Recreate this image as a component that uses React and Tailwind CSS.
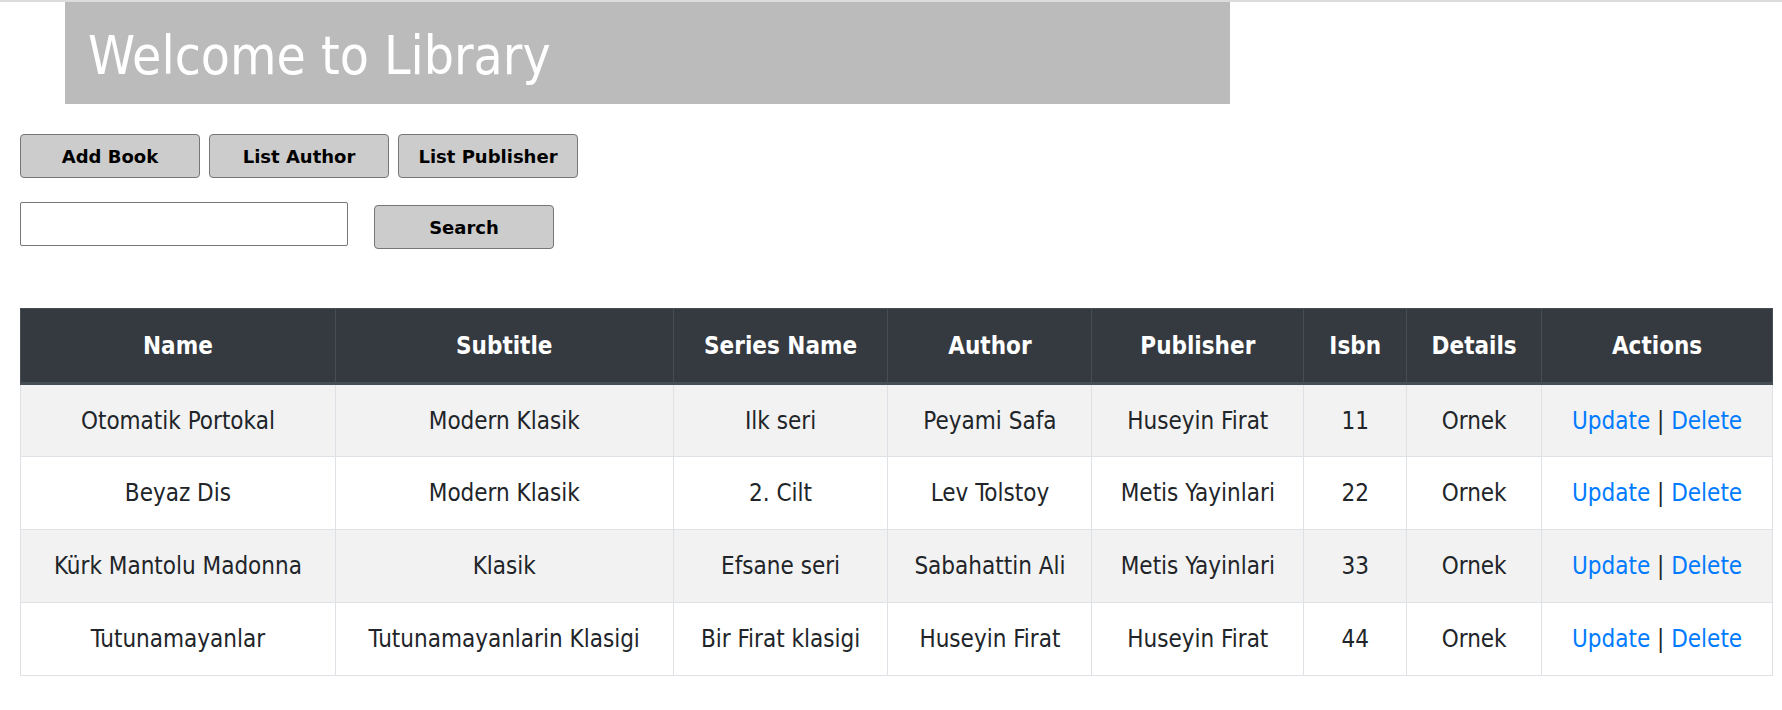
import React, { useState } from 'react'

const books = [
  { name: 'Otomatik Portokal', subtitle: 'Modern Klasik', series: 'Ilk seri', author: 'Peyami Safa', publisher: 'Huseyin Firat', isbn: '11', details: 'Ornek' },
  { name: 'Beyaz Dis', subtitle: 'Modern Klasik', series: '2. Cilt', author: 'Lev Tolstoy', publisher: 'Metis Yayinlari', isbn: '22', details: 'Ornek' },
  { name: 'Kürk Mantolu Madonna', subtitle: 'Klasik', series: 'Efsane seri', author: 'Sabahattin Ali', publisher: 'Metis Yayinlari', isbn: '33', details: 'Ornek' },
  { name: 'Tutunamayanlar', subtitle: 'Tutunamayanlarin Klasigi', series: 'Bir Firat klasigi', author: 'Huseyin Firat', publisher: 'Huseyin Firat', isbn: '44', details: 'Ornek' },
]

const columns = [
  { label: 'Name', w: 'w-[315px]' },
  { label: 'Subtitle', w: 'w-[338px]' },
  { label: 'Series Name', w: 'w-[215px]' },
  { label: 'Author', w: 'w-[204px]' },
  { label: 'Publisher', w: 'w-[212px]' },
  { label: 'Isbn', w: 'w-[103px]' },
  { label: 'Details', w: 'w-[135px]' },
  { label: 'Actions', w: 'w-[231px]' },
]

function GrayButton({ children, className = '' }) {
  return (
    <button className={`w-[180px] h-[44px] bg-[#cccccc] border border-[#767676] rounded-[4px] font-['DejaVu_Sans',sans-serif] text-[18px] font-bold text-black pt-[1px] ${className}`}>
      {children}
    </button>
  )
}

export default function App() {
  const [query, setQuery] = useState('')

  return (
    <div className="min-h-[710px] bg-white border-t-2 border-[#dcdcdc] font-['DejaVu_Sans_Condensed','DejaVu_Sans',sans-serif] text-[#212529]">

      {/* Başlık */}
      <div className="ml-[65px] w-[1165px] h-[102px] bg-[#bbbbbb] flex items-center pl-[23px] pt-[4px]">
        <h1 className="text-white text-[53px] leading-none">Welcome to Library</h1>
      </div>

      {/* Menü butonları */}
      <div className="flex gap-[9px] ml-[20px] mt-[30px]">
        <GrayButton>Add Book</GrayButton>
        <GrayButton>List Author</GrayButton>
        <GrayButton>List Publisher</GrayButton>
      </div>

      {/* Arama */}
      <div className="flex items-start gap-[26px] ml-[20px] mt-[24px]">
        <input
          type="text"
          value={query}
          onChange={(e) => setQuery(e.target.value)}
          className="w-[328px] h-[44px] border border-[#767676] rounded-[2px] px-2 text-[16px] focus:outline-none"
        />
        <GrayButton className="mt-[3px]">Search</GrayButton>
      </div>

      {/* Kitap tablosu */}
      <table className="ml-[20px] mt-[59px] w-[1753px] border-collapse text-[24px] text-center">
        <thead>
          <tr className="bg-[#343a40] text-white h-[75px]">
            {columns.map((c) => (
              <th key={c.label} className={`${c.w} font-bold border border-[#454d55] border-b-[3px]`}>{c.label}</th>
            ))}
          </tr>
        </thead>
        <tbody>
          {books.map((b, i) => (
            <tr key={b.isbn} className={`h-[73px] ${i % 2 === 0 ? 'bg-[#f2f2f2]' : 'bg-white'}`}>
              <td className="border border-[#dee2e6]">{b.name}</td>
              <td className="border border-[#dee2e6]">{b.subtitle}</td>
              <td className="border border-[#dee2e6]">{b.series}</td>
              <td className="border border-[#dee2e6]">{b.author}</td>
              <td className="border border-[#dee2e6]">{b.publisher}</td>
              <td className="border border-[#dee2e6]">{b.isbn}</td>
              <td className="border border-[#dee2e6]">{b.details}</td>
              <td className="border border-[#dee2e6]">
                <a href="#" className="text-[#007bff]">Update</a> | <a href="#" className="text-[#007bff]">Delete</a>
              </td>
            </tr>
          ))}
        </tbody>
      </table>
    </div>
  )
}
